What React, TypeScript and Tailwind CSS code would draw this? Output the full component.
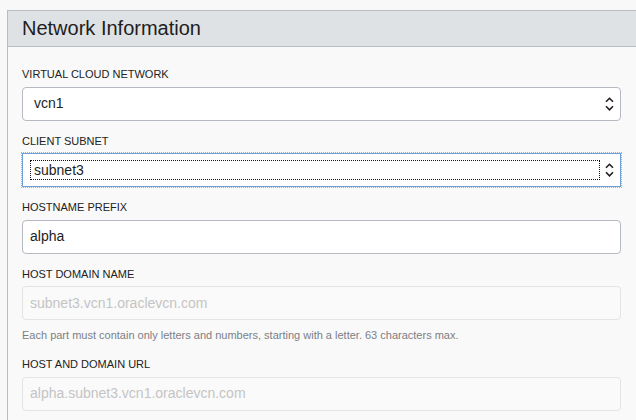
import * as React from "react";

function UpDown() {
  return (
    <svg width="9" height="14" viewBox="0 0 9 14" className="shrink-0">
      <path d="M1 4.8 L4.5 1.3 L8 4.8" fill="none" stroke="#1f1f1f" strokeWidth="1.6" />
      <path d="M1 9.3 L4.5 12.8 L8 9.3" fill="none" stroke="#1f1f1f" strokeWidth="1.6" />
    </svg>
  );
}

function Label({ children }: { children: React.ReactNode }) {
  return (
    <div className="text-[11px] leading-[16.5px] text-[#222] uppercase mb-[4px]">{children}</div>
  );
}

export default function App() {
  return (
    <div
      className="w-[636px] h-[420px] overflow-hidden bg-[#f8f8f8] pt-[10px] pl-[7px]"
      style={{ fontFamily: '"Liberation Sans", Arial, sans-serif' }}
    >
      <div className="border border-r-0 border-[#b9bdc3] bg-[#f9f9f9] h-[430px]">
        <div className="h-[36px] bg-[#dfe2e5] border-b border-[#b9bdc3] px-[14px] text-[20px] leading-[35px] text-[#1e1e1e]">
          Network Information
        </div>

        <div className="pt-[19px] pl-[14px] pr-[15px]">
          <Label>Virtual Cloud Network</Label>
          <div className="h-[34px] bg-white border border-[#b5b9c0] rounded-[4px] flex items-center pl-[11px] pr-[6px] text-[14px] text-[#1e1e1e]">
            <span className="flex-1">vcn1</span>
            <UpDown />
          </div>

          <div className="mt-[12px]">
            <Label>Client Subnet</Label>
            <div className="h-[34px] bg-white border border-[#6c9fd8] outline outline-1 outline-dotted outline-[#8fb6e6] flex items-center pl-[7px] pr-[6px] text-[14px] text-[#1e1e1e]">
              <div className="flex-1 h-[20px] border border-dotted border-[#111] flex items-center pl-[3px] mr-[5px]">
                subnet3
              </div>
              <UpDown />
            </div>
          </div>

          <div className="mt-[12px]">
            <Label>Hostname Prefix</Label>
            <div className="h-[34px] bg-white border border-[#b5b9c0] rounded-[4px] flex items-center pl-[7px] text-[14px] text-[#1e1e1e]">
              alpha
            </div>
          </div>

          <div className="mt-[12px]">
            <Label>Host Domain Name</Label>
            <div className="h-[34px] bg-[#fafafa] border border-[#e4e4e4] rounded-[4px] flex items-center pl-[7px] text-[14px] text-[#c4c4c4]">
              subnet3.vcn1.oraclevcn.com
            </div>
            <div className="mt-[7px] text-[11px] leading-[16.5px] text-[#7b7f86]">
              Each part must contain only letters and numbers, starting with a letter. 63 characters max.
            </div>
          </div>

          <div className="mt-[12.5px]">
            <Label>Host and Domain URL</Label>
            <div className="h-[34px] bg-[#fafafa] border border-[#e4e4e4] rounded-[4px] flex items-center pl-[7px] text-[14px] text-[#c4c4c4]">
              alpha.subnet3.vcn1.oraclevcn.com
            </div>
          </div>
        </div>
      </div>
    </div>
  );
}
